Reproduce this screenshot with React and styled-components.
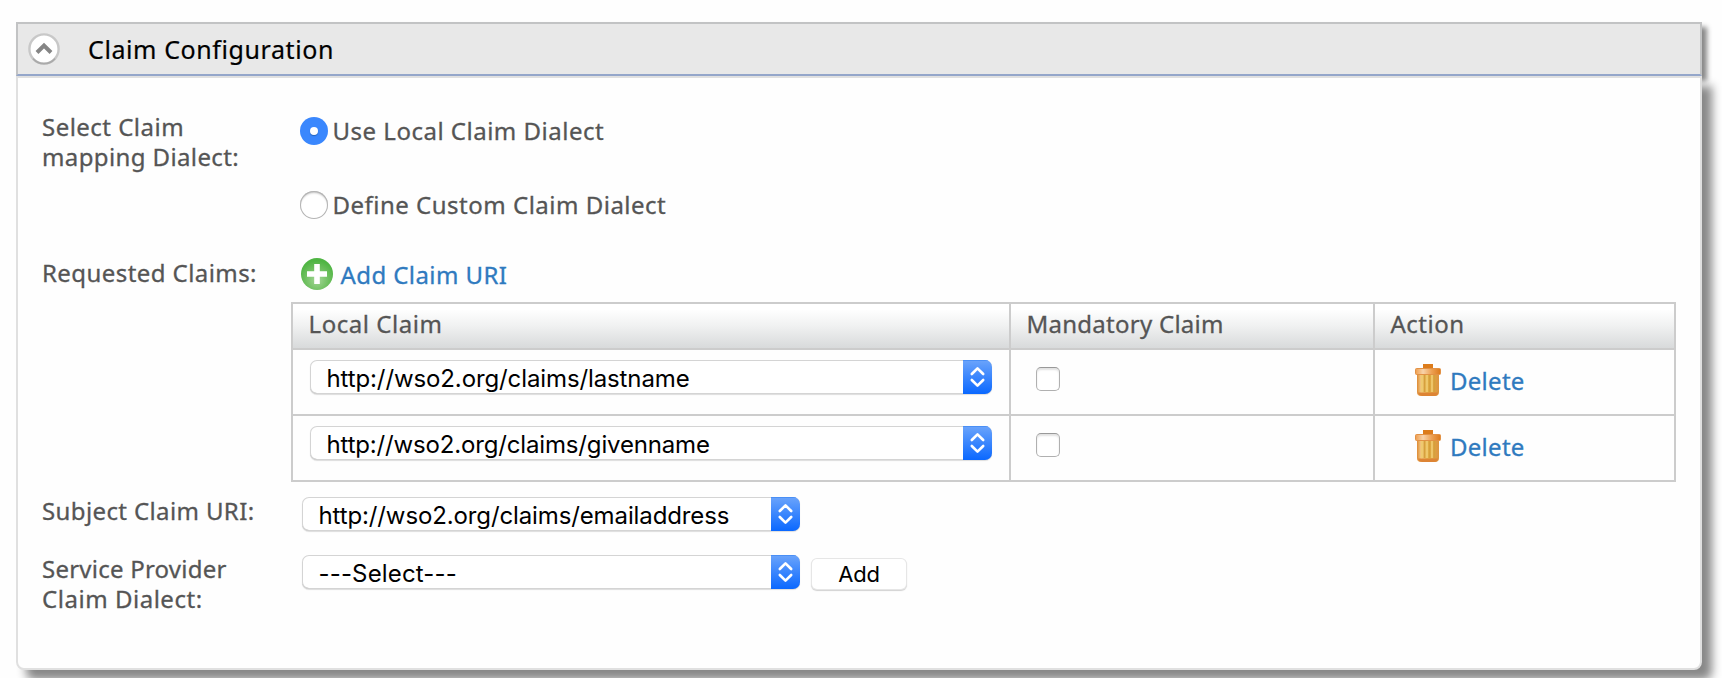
import React from 'react';
import styled, { createGlobalStyle } from 'styled-components';

const GlobalStyle = createGlobalStyle`
  * { box-sizing: border-box; }
  html, body { margin: 0; height: 100%; overflow: hidden; background: #fefefe; }
  body {
    font-family: 'Noto Sans', 'Open Sans', sans-serif;
    font-size: 24px;
    line-height: 30px;
    letter-spacing: 0.5px;
    color: #555;
    white-space: nowrap;
    -webkit-text-stroke: 0.3px currentColor;
  }
`;

const Page = styled.main`
  height: 678px;
  padding: 22px 20px 8px 16px;
  overflow: hidden;
`;

const PanelHeader = styled.header`
  display: flex;
  align-items: center;
  height: 54px;
  padding-left: 10px;
  border: 2px solid #c2c3c4;
  border-bottom-color: #94a6ca;
  background: #e8e8e8;
  box-shadow: 5px 5px 5px #888;
`;

const PanelTitle = styled.h2`
  margin: 0 0 1px 28px;
  font-size: 25px;
  font-weight: 400;
  letter-spacing: 0.59px;
  color: #000;
  -webkit-text-stroke: 0.2px #000;
`;

const PanelBody = styled.section`
  position: relative;
  height: 594px;
  padding-top: 34px;
  border: 2px solid #e0e0e0;
  border-radius: 0 0 8px 8px;
  background: #fefefe;
  box-shadow: 10px 10px 10px #888;
`;

const FormRow = styled.div`
  display: grid;
  grid-template-columns: 249px 1385px;
  align-items: start;
  height: ${(p) => p.$height}px;
  padding-left: 24px;
`;

const Label = styled.label`
  display: flex;
  flex-direction: column;
  padding-top: ${(p) => p.$top || 0}px;
`;

const LabelLine = styled.span`
  letter-spacing: ${(p) => p.$tracking}px;
`;

const RadioGroup = styled.div`
  display: flex;
  flex-direction: column;
  gap: 44px;
  padding: 4px 0 0 9px;
`;

const RadioOption = styled.label`
  display: flex;
  align-items: center;
  gap: 4.5px;
  height: 30px;
`;

const RadioMark = styled.span`
  display: flex;
  align-items: center;
  justify-content: center;
  width: 28px;
  height: 28px;
  border-radius: 50%;
  background: ${(p) => (p.$checked ? '#3a87fd' : '#fff')};
  box-shadow: ${(p) =>
    p.$checked ? 'none' : 'inset 0 0 0 1px #b4b4b4, inset 0 2px 2px #c4c4c4'};

  &::after {
    content: '';
    width: 8px;
    height: 8px;
    border-radius: 50%;
    background: #fff;
    box-shadow: ${(p) => (p.$checked ? '0 1px 1px #2463bd' : 'none')};
  }
`;

const ActionLink = styled.a`
  display: inline-flex;
  align-items: center;
  gap: ${(p) => p.$gap}px;
  height: 32px;
  letter-spacing: ${(p) => p.$tracking}px;
  color: #2f7abf;

  span { padding-top: 2px; }
`;

const ClaimsField = styled.div`
  display: flex;
  flex-direction: column;
  gap: 12px;

  > a { margin-left: 10px; }
`;

const ClaimsTable = styled.div`
  border: 2px solid #ccc;
`;

const TableRow = styled.div`
  display: grid;
  grid-template-columns: 718px 364px 299px;
  height: ${(p) => (p.$last ? 64 : 66)}px;
  border-bottom: ${(p) => (p.$last ? 0 : 2)}px solid #ccc;

  > *:not(:last-child) { border-right: 2px solid #ccc; }
`;

const TableHead = styled(TableRow)`
  height: 46px;
  background: linear-gradient(#fff 12%, #f0f1f1 50%, #d8dadb);
`;

const HeadCell = styled.div`
  padding: 5px 0 0 15.5px;
  letter-spacing: ${(p) => p.$tracking}px;
`;

const Cell = styled.div`
  display: flex;
  align-items: flex-start;
  padding: ${(p) => p.$pad};
`;

const Checkbox = styled.span`
  width: 24px;
  height: 24px;
  border: 1px solid #b0b0b0;
  border-top-color: #999;
  border-radius: 5px;
  background: #fff;
  box-shadow: inset 0 2px 2px #e2e2e2;
`;

const SelectBox = styled.div`
  display: flex;
  justify-content: space-between;
  width: ${(p) => p.$width}px;
  height: 34px;
  border-radius: 7px;
  background: #fff;
  box-shadow: inset 0 0 0 1px #d4d4d4, inset 0 -1px 0 #b5b5b5, 0 1px 1px #ddd;
  overflow: hidden;
`;

const SelectValue = styled.span`
  padding: 2px 0 0 16.5px;
  font-family: Inter, 'Liberation Sans', sans-serif;
  line-height: 34px;
  letter-spacing: ${(p) => p.$tracking}px;
  color: #000;
  -webkit-text-stroke-width: 0;
`;

const SelectArrows = styled.span`
  width: 29px;
  height: 34px;
  background: linear-gradient(#6ba4fb, #0a68ff);
  box-shadow: inset 0 1px 0 #4a8ff5;
  svg { display: block; }
`;

const SelectLine = styled.div`
  display: flex;
  align-items: flex-start;
  gap: 12px;
  padding: ${(p) => p.$top}px 0 0 11px;
`;

const AddButton = styled.button`
  width: 94px;
  height: 30px;
  margin-top: 4px;
  padding: 0;
  border: 0;
  border-radius: 5px;
  background: #fff;
  box-shadow: 0 0 0 1px #e6e6e6, 0 1px 1px 1px #d2d2d2;
  font: 22px/30px Inter, 'Liberation Sans', sans-serif;
  letter-spacing: -0.15px;
  color: #000;
  -webkit-text-stroke-width: 0;
`;

function CollapseIcon() {
  return (
    <svg width="32" height="32" viewBox="0 0 32 32">
      <circle cx="16" cy="16" r="14.6" fill="#fff" stroke="#c8c8c8" strokeWidth="2.4" />
      <path d="M5 25.6a14.6 14.6 0 0 0 22 0" fill="none" stroke="#aaa" strokeWidth="1.6" />
      <path d="M9 19.5l7-7 7 7" fill="none" stroke="#858585" strokeWidth="4" />
    </svg>
  );
}

function PlusIcon() {
  return (
    <svg width="32" height="32" viewBox="0 0 32 32">
      <defs>
        <radialGradient id="plusFill" cx=".5" cy=".68" r=".6">
          <stop offset="0" stopColor="#a5d698" />
          <stop offset=".6" stopColor="#6fc060" />
          <stop offset="1" stopColor="#4fb543" />
        </radialGradient>
      </defs>
      <circle cx="16" cy="16" r="16" fill="url(#plusFill)" />
      <path d="M16 6v20M6 16h20" stroke="#fff" strokeWidth="5.6" />
    </svg>
  );
}

function TrashIcon() {
  return (
    <svg width="26" height="32" viewBox="0 0 26 32">
      <defs>
        <linearGradient id="trashLid">
          <stop offset="0" stopColor="#ee9d4e" />
          <stop offset=".3" stopColor="#f8d3aa" />
          <stop offset=".65" stopColor="#eda052" />
          <stop offset="1" stopColor="#dc7a1c" />
        </linearGradient>
        <linearGradient id="trashCan">
          <stop offset="0" stopColor="#dd8a35" />
          <stop offset=".2" stopColor="#f5cf8a" />
          <stop offset=".5" stopColor="#e6b44a" />
          <stop offset="1" stopColor="#dc9440" />
        </linearGradient>
      </defs>
      <path d="M8 0h10v5H8z" fill="#dc7c1c" />
      <path d="M2 10h22v18q0 4-4 4H6q-4 0-4-4z" fill="url(#trashCan)" />
      <path d="M9.5 11v17M14.5 11v17M19.5 11v17" stroke="#d6a03c" strokeWidth="1.8" />
      <path d="M7 11v17M12 11v17M17 11v17" stroke="#efc96e" strokeWidth="1.8" />
      <path d="M3 28.5h20q-.5 3.5-4 3.5H7q-3.5 0-4-3.5z" fill="#dd8434" />
      <rect x=".5" y="4.5" width="25" height="6" rx="1" fill="url(#trashLid)" stroke="#e29145" />
    </svg>
  );
}

function Select({ value, width, tracking }) {
  return (
    <SelectBox $width={width}>
      <SelectValue $tracking={tracking}>{value}</SelectValue>
      <SelectArrows>
        <svg width="29" height="34" viewBox="0 0 29 34">
          <path
            d="M8.8 14l5.7-5.7 5.7 5.7M8.8 20l5.7 5.7 5.7-5.7"
            fill="none"
            stroke="#fff"
            strokeWidth="2.6"
            strokeLinecap="round"
            strokeLinejoin="round"
          />
        </svg>
      </SelectArrows>
    </SelectBox>
  );
}

const claims = [
  { uri: 'http://wso2.org/claims/lastname', tracking: -0.11 },
  { uri: 'http://wso2.org/claims/givenname', tracking: -0.16 },
];

export default function App() {
  return (
    <Page>
      <GlobalStyle />
      <PanelHeader>
        <CollapseIcon />
        <PanelTitle>Claim Configuration</PanelTitle>
      </PanelHeader>
      <PanelBody>
        <FormRow $height={146}>
          <Label>
            <LabelLine $tracking={0.48}>Select Claim</LabelLine>
            <LabelLine $tracking={0.38}>mapping Dialect:</LabelLine>
          </Label>
          <RadioGroup>
            <RadioOption>
              <RadioMark $checked />
              Use Local Claim Dialect
            </RadioOption>
            <RadioOption>
              <RadioMark />
              Define Custom Claim Dialect
            </RadioOption>
          </RadioGroup>
        </FormRow>
        <FormRow $height={224}>
          <Label>
            <LabelLine $tracking={0.43}>Requested Claims:</LabelLine>
          </Label>
          <ClaimsField>
            <ActionLink $gap={7.5} $tracking={0.42}>
              <PlusIcon />
              <span>Add Claim URI</span>
            </ActionLink>
            <ClaimsTable>
              <TableHead>
                <HeadCell $tracking={0.55}>Local Claim</HeadCell>
                <HeadCell $tracking={0.26}>Mandatory Claim</HeadCell>
                <HeadCell $tracking={0.5}>Action</HeadCell>
              </TableHead>
              {claims.map((claim, i) => (
                <TableRow key={claim.uri} $last={i === claims.length - 1}>
                  <Cell $pad="10px 0 0 17px">
                    <Select value={claim.uri} width={682} tracking={claim.tracking} />
                  </Cell>
                  <Cell $pad="17px 0 0 25px">
                    <Checkbox />
                  </Cell>
                  <Cell $pad="14px 0 0 40px">
                    <ActionLink $gap={9} $tracking={0.28}>
                      <TrashIcon />
                      <span>Delete</span>
                    </ActionLink>
                  </Cell>
                </TableRow>
              ))}
            </ClaimsTable>
          </ClaimsField>
        </FormRow>
        <FormRow $height={72}>
          <Label $top={14}>
            <LabelLine $tracking={0.38}>Subject Claim URI:</LabelLine>
          </Label>
          <SelectLine $top={15}>
            <Select value="http://wso2.org/claims/emailaddress" width={498} tracking={-0.12} />
          </SelectLine>
        </FormRow>
        <FormRow $height={72}>
          <Label>
            <LabelLine $tracking={0.23}>Service Provider</LabelLine>
            <LabelLine $tracking={0.53}>Claim Dialect:</LabelLine>
          </Label>
          <SelectLine $top={1}>
            <Select value="---Select---" width={498} tracking={0.16} />
            <AddButton>Add</AddButton>
          </SelectLine>
        </FormRow>
      </PanelBody>
    </Page>
  );
}
